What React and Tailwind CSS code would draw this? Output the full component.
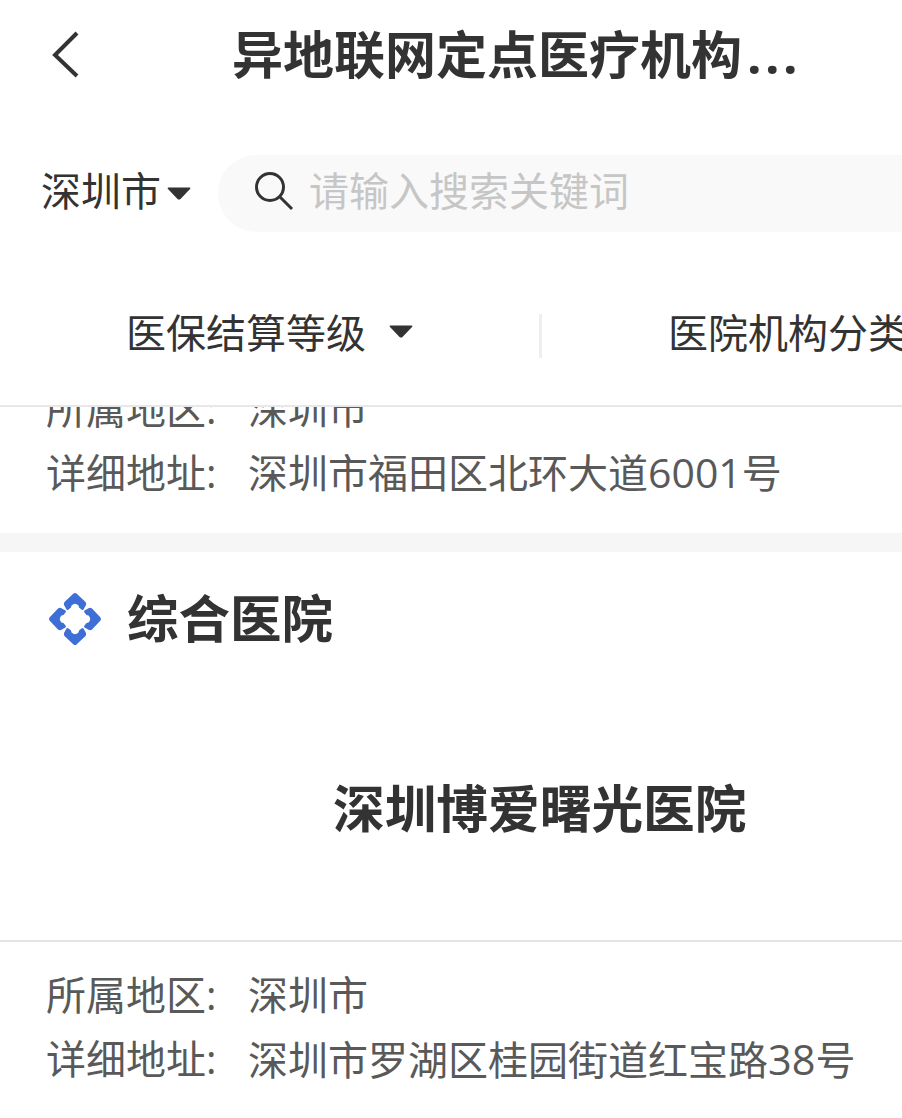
const cjk = { fontFamily: '"Open Sans", "Noto Sans CJK SC", sans-serif' };

const Caret = ({ className }) => (
  <svg className={className} viewBox="0 0 24 13" fill="#333333">
    <path d="M1.5 0.5 H22.5 Q24 0.5 23 2 L13.5 12 Q12 13.2 10.5 12 L1 2 Q0 0.5 1.5 0.5 Z" />
  </svg>
);

const petal = 'M25.5 1.5 Q27 0.5 28.5 1.5 L37.5 10 Q38.5 11.5 38 13 L35.5 17.5 Q34.5 18.5 33.5 17.5 L31 15.5 L30.5 13.5 Q27 10 23.5 13.5 L23 15.5 L20.5 17.5 Q19.5 18.5 18.5 17.5 L16 13 Q15.5 11.5 16.5 10 Z';

const HospitalIcon = () => (
  <svg className="w-[54px] h-[54px] shrink-0" viewBox="0 0 54 54" fill="#3d6fd6">
    <path d={petal} />
    <path d={petal} transform="rotate(90 27 27)" />
    <path d={petal} transform="rotate(180 27 27)" />
    <path d={petal} transform="rotate(270 27 27)" />
  </svg>
);

const InfoRow = ({ label, children }) => (
  <div className="flex h-[64px] pt-[2px] items-center pl-[46px] text-[40px] text-[#595959] whitespace-nowrap">
    <span className="w-[202px] shrink-0">{label}</span>
    <span>{children}</span>
  </div>
);

export default function App() {
  return (
    <div className="w-[902px] h-[1118px] overflow-hidden bg-white flex flex-col" style={cjk}>
      {/* top bar */}
      <div className="h-[118px] flex items-center shrink-0">
        <svg className="w-[30px] h-[48px] ml-[51px] mb-[8px] shrink-0" viewBox="0 0 30 48" fill="none" stroke="#333333" strokeWidth="4">
          <path d="M26 2 L4 24 L26 45" />
        </svg>
        <h1 className="ml-[151px] mb-[9px] text-[51px] font-bold text-[#333333] whitespace-nowrap leading-none">
          异地联网定点医疗机构<span className="ml-[5px] tracking-[3.5px]">...</span>
        </h1>
      </div>

      {/* city + search */}
      <div className="h-[77px] mt-[37px] flex items-center shrink-0">
        <span className="ml-[41px] mb-[5px] text-[40px] text-[#333333] whitespace-nowrap">深圳市</span>
        <Caret className="w-[24px] h-[13px] ml-[6px] shrink-0" />
        <div className="ml-[27px] flex-1 h-full bg-[#f9f9f9] rounded-l-[38px] flex items-center">
          <svg className="w-[40px] h-[40px] ml-[36px] mb-[6px] shrink-0" viewBox="0 0 40 40" fill="none" stroke="#333333" strokeWidth="3">
            <circle cx="16" cy="16" r="13.5" />
            <path d="M26 26 L38 38" />
          </svg>
          <span className="ml-[15px] mb-[5px] text-[40px] text-[#c6c6c6] whitespace-nowrap">请输入搜索关键词</span>
        </div>
      </div>

      {/* filters */}
      <div className="h-[175px] pt-[28px] flex items-center border-b-2 border-[#e8e8e8] shrink-0 overflow-hidden whitespace-nowrap text-[40px] text-[#333333]">
        <span className="ml-[126px]">医保结算等级</span>
        <Caret className="w-[24px] h-[13px] ml-[23px] mb-[2px] shrink-0" />
        <div className="w-[3px] h-[44px] bg-[#efefef] ml-[126px] mt-[6px] shrink-0" />
        <span className="ml-[126px]">医院机构分类</span>
      </div>

      {/* list */}
      <div className="flex-1 overflow-hidden">
        <div className="mt-[-31px] pb-[29px]">
          <InfoRow label="所属地区:">深圳市</InfoRow>
          <InfoRow label="详细地址:">
            深圳市福田区北环大道<span className="text-[41px]">6001</span>号
          </InfoRow>
        </div>
        <div className="h-[19px] bg-[#f6f6f6]" />
        <div className="h-[134px] flex items-center pl-[48px]">
          <HospitalIcon />
          <h2 className="ml-[25px] text-[51.5px] font-bold text-[#333333] leading-none">综合医院</h2>
        </div>
        <div className="h-[256px] flex items-center pl-[333px] pb-[8px] border-b-2 border-[#e4e4e4]">
          <h3 className="text-[51.7px] font-bold text-[#333333] leading-none whitespace-nowrap">深圳博爱曙光医院</h3>
        </div>
        <div className="pt-[20px]">
          <InfoRow label="所属地区:">深圳市</InfoRow>
          <InfoRow label="详细地址:">
            深圳市罗湖区桂园街道红宝路<span className="text-[41.5px]">38</span>号
          </InfoRow>
        </div>
      </div>
    </div>
  );
}
